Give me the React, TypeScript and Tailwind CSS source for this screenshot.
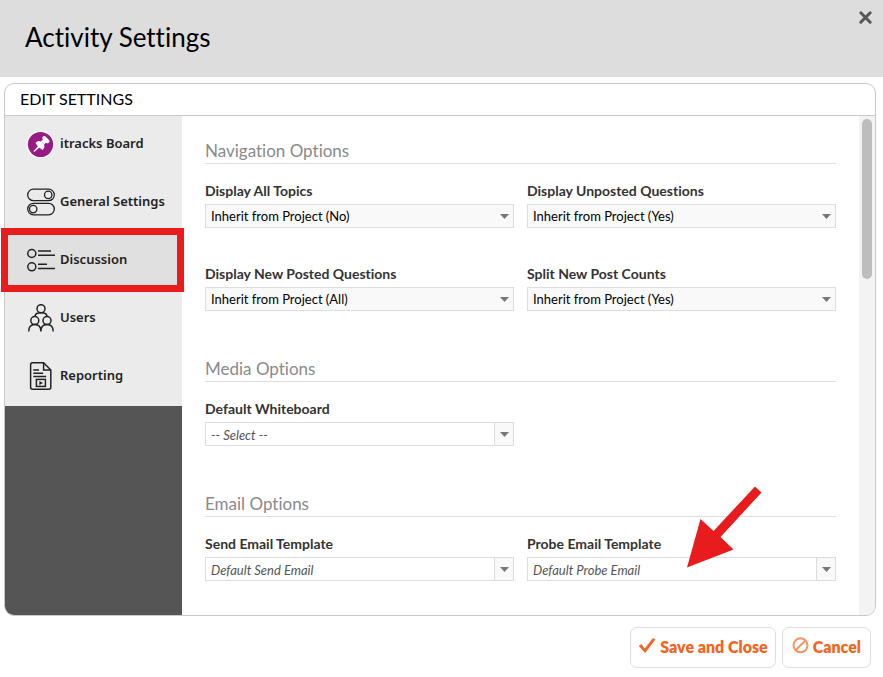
import type { ReactNode } from "react";

function BoardIcon() {
  return (
    <svg width="28" height="28" viewBox="0 0 28 28">
      <circle cx="13.5" cy="14.5" r="14" fill="#fff" />
      <circle cx="13.5" cy="14.5" r="12.6" fill="#981b85" />
      <g transform="translate(13.5 15) rotate(45)" fill="#fff">
        <rect x="-4.2" y="-9.6" width="8.4" height="4" rx="1.8" />
        <path d="M-2 -6 H2 L2.4 -2.6 Q5.2 -1.6 5 2.2 Q0 3.6 -5 2.2 Q-5.2 -1.6 -2.4 -2.6 Z" />
        <path d="M-1.1 2 H1.1 L0.5 9.4 H-0.5 Z" />
      </g>
      <path d="M14.4 11.6 L17 14" stroke="#d9a8d2" strokeWidth="0.8" />
    </svg>
  );
}

function TogglesIcon() {
  return (
    <svg width="28" height="28" viewBox="0 0 28 28" fill="none" stroke="#222" strokeWidth="1.3">
      <rect x="0.7" y="1.2" width="26.6" height="11.4" rx="5.7" />
      <circle cx="21.2" cy="6.9" r="3.7" />
      <rect x="0.7" y="15.4" width="26.6" height="11.4" rx="5.7" />
      <circle cx="6.2" cy="21.1" r="3.7" />
    </svg>
  );
}

function ListIcon() {
  return (
    <svg width="28" height="28" viewBox="0 0 28 28" fill="none" stroke="#222" strokeWidth="1.5">
      <circle cx="4.8" cy="7.5" r="4" />
      <circle cx="4.8" cy="20.8" r="4" />
      <path d="M11 5 H24 M11 9.2 H28 M11 18.2 H20 M11 22.4 H28" />
    </svg>
  );
}

function UsersIcon() {
  return (
    <svg width="28" height="28" viewBox="0 0 28 28" fill="none" stroke="#222" strokeWidth="1.5">
      <circle cx="14" cy="4.7" r="4" />
      <circle cx="7.8" cy="16.6" r="4" />
      <circle cx="20" cy="16.6" r="4" />
      <path d="M8 12.5 C8 10 10.8 8.8 14 8.8 C17.2 8.8 20 10 20 12.5" />
      <path d="M1.7 27.6 C1.7 23 4.2 20.6 7.8 20.6 C11.4 20.6 13.9 23 13.9 27.6 C13.9 23 16.4 20.6 20 20.6 C23.6 20.6 26.2 23 26.2 27.6" />
    </svg>
  );
}

function ReportIcon() {
  return (
    <svg width="28" height="28" viewBox="0 0 28 28" fill="none" stroke="#222" strokeWidth="1.5">
      <path d="M5.6 0.8 H16.6 L23.8 8 V25.2 Q23.8 27.2 21.8 27.2 H5.6 Q3.6 27.2 3.6 25.2 V2.8 Q3.6 0.8 5.6 0.8 Z" />
      <path d="M16.6 0.8 V8 H23.8" />
      <path d="M6.3 8 H12 M6.3 11.2 H16.2 M6.3 14.4 H19.2" />
      <rect x="9.4" y="17.4" width="9" height="7" />
      <path d="M12.4 19 L16 21 L12.4 23 Z" fill="#222" stroke="none" />
    </svg>
  );
}

function Caret() {
  return (
    <svg width="9" height="5" viewBox="0 0 9 5" aria-hidden="true">
      <path d="M0 0 H9 L4.5 5 Z" fill="#777" />
    </svg>
  );
}

const navItems = [
  { label: "itracks Board", icon: <BoardIcon /> },
  { label: "General Settings", icon: <TogglesIcon /> },
  { label: "Discussion", icon: <ListIcon />, active: true },
  { label: "Users", icon: <UsersIcon /> },
  { label: "Reporting", icon: <ReportIcon /> },
];

function Section({ title, children }: { title: string; children: ReactNode }) {
  return (
    <section>
      <h3 className="h-[25px] border-b border-[#ddd] text-[17px] leading-6 text-[#8a8a8a]">{title}</h3>
      <div className="mt-[17px] grid grid-cols-2 gap-x-[13px] gap-y-9">{children}</div>
    </section>
  );
}

function SelectField({ id, label, value }: { id: string; label: string; value: string }) {
  return (
    <div>
      <label htmlFor={id} className="block h-[23px] text-sm leading-5 font-bold text-[#333]">
        {label}
      </label>
      <div className="relative">
        <select
          id={id}
          className="block h-6 w-full appearance-none border border-[#ddd] bg-[#f9f9f9] pr-6 pl-[5px] text-[13px] leading-5 text-black"
        >
          <option>{value}</option>
        </select>
        <span className="pointer-events-none absolute inset-y-0 right-[5px] flex items-center">
          <Caret />
        </span>
      </div>
    </div>
  );
}

function ComboField({ id, label, placeholder, children }: { id: string; label: string; placeholder: string; children?: ReactNode }) {
  return (
    <div className="relative">
      <label htmlFor={id} className="block h-[23px] text-sm leading-5 font-bold text-[#333]">
        {label}
      </label>
      <div className="flex h-6 border border-[#ddd]">
        <input
          id={id}
          placeholder={placeholder}
          className="min-w-0 flex-1 bg-white px-[5px] pt-0.5 text-[13px] leading-5 placeholder:text-[#555] placeholder:italic"
        />
        <button
          aria-label={`Open ${label}`}
          className="flex w-[19px] items-center justify-center border-l border-[#ddd] bg-[#f9f9f9]"
        >
          <Caret />
        </button>
      </div>
      {children}
    </div>
  );
}

export default function App() {
  return (
    <div className="bg-white font-[Lato,sans-serif] text-black [font-variant-ligatures:no-common-ligatures]">
      <header className="flex h-[77px] items-start justify-between bg-[#ddd] pr-[10px] pl-[25px]">
        <h1 className="pt-[17px] text-[26px] leading-10">Activity Settings</h1>
        <button aria-label="Close" className="mt-[10px]">
          <svg width="15" height="15" viewBox="0 0 15 15" stroke="#555" strokeWidth="3" strokeLinecap="round">
            <path d="M2.8 2.8 L12.2 12.2 M12.2 2.8 L2.8 12.2" />
          </svg>
        </button>
      </header>

      <main className="mt-1.5 mr-[7px] ml-1 rounded-[10px] border border-[#c8c8c8]">
        <h2 className="h-8 border-b border-[#c8c8c8] pl-[15px] text-base leading-[30px]">EDIT SETTINGS</h2>
        <div className="flex">
          <nav className="w-[177px] shrink-0 rounded-bl-[9px] bg-[#555]">
            {navItems.map((item) => (
              <button
                key={item.label}
                className={`relative flex h-[58px] w-full items-center gap-[5px] pb-0.5 pl-[22px] font-['Noto_Sans',sans-serif] text-[13px] font-semibold text-[#222] ${
                  item.active ? "bg-[#e0e0e0]" : "bg-[#ebebeb]"
                }`}
              >
                {item.icon}
                {item.label}
                {item.active && (
                  <span className="absolute -top-1 -right-0.5 -bottom-0.5 -left-1 z-10 border-[7px] border-[#e81c1c]" />
                )}
              </button>
            ))}
          </nav>

          <div className="flex min-w-0 flex-1 flex-col gap-[46px] px-[23px] pt-[23px] pb-[34px]">
            <Section title="Navigation Options">
              <SelectField id="all-topics" label="Display All Topics" value="Inherit from Project (No)" />
              <SelectField id="unposted" label="Display Unposted Questions" value="Inherit from Project (Yes)" />
              <SelectField id="new-posted" label="Display New Posted Questions" value="Inherit from Project (All)" />
              <SelectField id="split-counts" label="Split New Post Counts" value="Inherit from Project (Yes)" />
            </Section>
            <Section title="Media Options">
              <ComboField id="whiteboard" label="Default Whiteboard" placeholder="-- Select --" />
            </Section>
            <Section title="Email Options">
              <ComboField id="send-email" label="Send Email Template" placeholder="Default Send Email" />
              <ComboField id="probe-email" label="Probe Email Template" placeholder="Default Probe Email">
                <svg
                  className="pointer-events-none absolute right-[74px] bottom-[13px]"
                  width="76"
                  height="82"
                  viewBox="0 0 76 82"
                >
                  <path d="M1 81.5 L14.5 33 L27.5 45 L69 0.5 L75.5 6.5 L34.5 51 L47.5 63.5 Z" fill="#e81c1c" />
                </svg>
              </ComboField>
            </Section>
          </div>

          <div className="w-4 shrink-0 rounded-br-[9px] bg-[#f3f3f3] px-[3px] pt-[3px]">
            <div className="h-40 w-[10px] rounded-full bg-[#bdbdbd]" />
          </div>
        </div>
      </main>

      <footer className="flex justify-end gap-1.5 pt-[11px] pr-3 pb-[9px] text-base font-extrabold text-[#f26522]">
        <button className="flex h-[41px] items-center gap-1 rounded-[7px] border border-[#ddd] px-[7px] pb-px">
          <svg width="18" height="20" viewBox="0 0 18 20">
            <path d="M0.8 9 L3.4 7 L6.8 11.4 L15 1 L17.4 2.6 L7.2 16 Z" fill="#f26522" />
          </svg>
          Save and Close
        </button>
        <button className="flex h-[41px] items-center gap-1 rounded-[7px] border border-[#ddd] px-[9px] pb-px">
          <svg width="17" height="20" viewBox="0 0 17 20" fill="none" stroke="#f6935f" strokeWidth="2">
            <circle cx="8.5" cy="8.3" r="7" />
            <path d="M3.6 13.2 L13.4 3.4" />
          </svg>
          Cancel
        </button>
      </footer>
    </div>
  );
}
